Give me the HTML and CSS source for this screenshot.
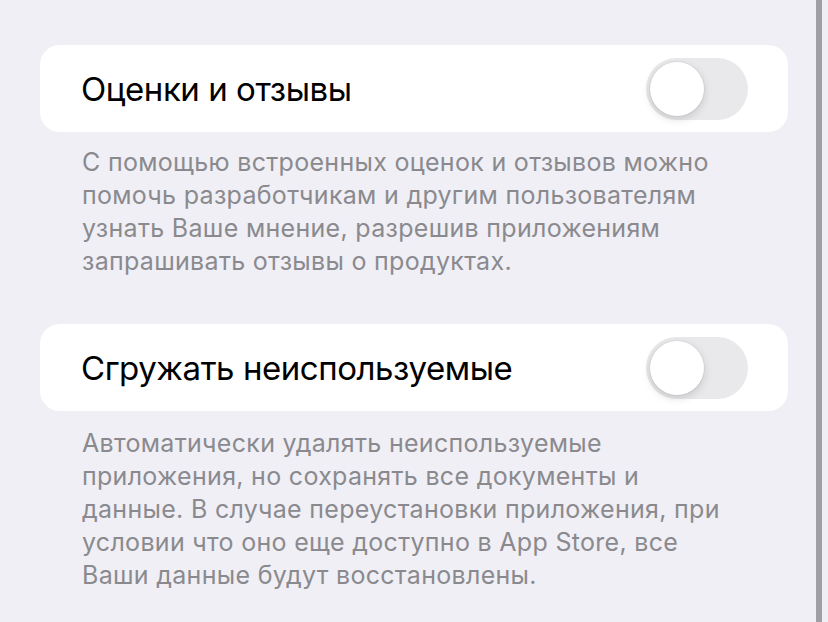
FILE: index.html
```html
<!DOCTYPE html>
<html lang="ru">
<head>
<meta charset="utf-8">
<link rel="stylesheet" href="styles.css">
</head>
<body>
<div class="screen">
  <div class="content">
    <section class="group">
      <div class="card">
        <span class="label">Оценки и отзывы</span>
        <span class="switch"><span class="knob"></span></span>
      </div>
      <p class="footer">С помощью встроенных оценок и отзывов можно<br>помочь разработчикам и другим пользователям<br>узнать Ваше мнение, разрешив приложениям<br>запрашивать отзывы о продуктах.</p>
    </section>
    <section class="group">
      <div class="card">
        <span class="label">Сгружать неиспользуемые</span>
        <span class="switch"><span class="knob"></span></span>
      </div>
      <p class="footer second">Автоматически удалять неиспользуемые<br>приложения, но сохранять все документы и<br>данные. В случае переустановки приложения, при<br>условии что оно еще доступно в App Store, все<br>Ваши данные будут восстановлены.</p>
    </section>
  </div>
  <div class="scrollbar"></div>
</div>
</body>
</html>
```
FILE: styles.css
```css
html, body {
  margin: 0;
  padding: 0;
  background: #f0eff5;
}
body {
  font-family: Inter, "Noto Sans", sans-serif;
  width: 828px;
  height: 622px;
  overflow: hidden;
}
.screen {
  display: flex;
  height: 622px;
}
.content {
  width: 748px;
  padding: 45px 28px 0 40px;
  display: flex;
  flex-direction: column;
  gap: 46px;
}
.group {
  display: flex;
  flex-direction: column;
}
.card {
  background: #ffffff;
  border-radius: 20px;
  height: 87px;
  display: flex;
  align-items: center;
  justify-content: space-between;
  padding: 0 40px 0 41px;
}
.label {
  font-size: 33px;
  color: #000;
  letter-spacing: -0.45px;
}
.switch {
  width: 102px;
  height: 62px;
  border-radius: 31px;
  background: #e9e9eb;
  display: flex;
  align-items: center;
  padding-left: 4px;
  box-sizing: border-box;
}
.knob {
  width: 54px;
  height: 54px;
  border-radius: 50%;
  background: #fff;
  box-shadow: 0 3px 8px rgba(0,0,0,0.15), 0 0 0 1px rgba(0,0,0,0.04);
}
.footer {
  margin: 0;
  padding: 14px 0 0 42px;
  font-size: 25px;
  line-height: 33px;
  letter-spacing: 0.3px;
  color: #8a8a8e;
}
.footer.second {
  padding-top: 16px;
}
.scrollbar {
  width: 6px;
  height: 622px;
  background: #a09fa5;
}
```
